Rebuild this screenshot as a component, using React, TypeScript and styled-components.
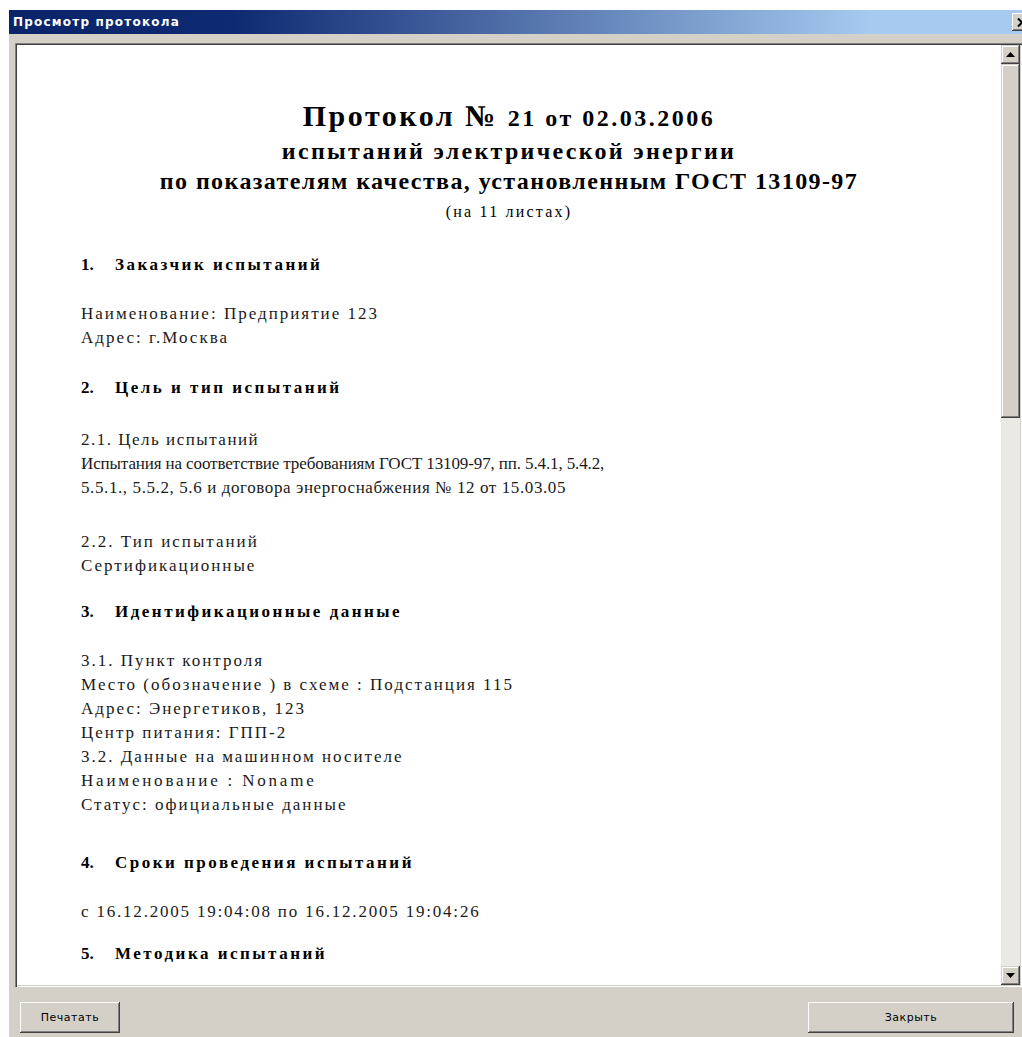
import React from 'react';
import styled, { createGlobalStyle } from 'styled-components';

type Line = string | { text: string; spacing: number };
type Block = { top: number; lines: Line[] };
type Section = { num: string; title: string; top: number; blocks: Block[] };

const sections: Section[] = [
  {
    num: '1.',
    title: 'Заказчик испытаний',
    top: 0,
    blocks: [{ top: 25, lines: ['Наименование: Предприятие 123', 'Адрес: г.Москва'] }],
  },
  {
    num: '2.',
    title: 'Цель и тип испытаний',
    top: 26,
    blocks: [
      {
        top: 28,
        lines: [
          { text: '2.1. Цель испытаний', spacing: 1.5 },
          { text: 'Испытания на соответствие требованиям ГОСТ 13109-97, пп. 5.4.1, 5.4.2,', spacing: -0.12 },
          { text: '5.5.1., 5.5.2, 5.6 и договора энергоснабжения № 12 от 15.03.05', spacing: 0.6 },
        ],
      },
      { top: 30, lines: ['2.2. Тип испытаний', 'Сертификационные'] },
    ],
  },
  {
    num: '3.',
    title: 'Идентификационные данные',
    top: 22,
    blocks: [
      {
        top: 25,
        lines: [
          '3.1. Пункт контроля',
          'Место (обозначение ) в схеме : Подстанция 115',
          'Адрес: Энергетиков, 123',
          'Центр питания: ГПП-2',
          '3.2. Данные на машинном носителе',
          { text: 'Наименование : Noname', spacing: 2.8 },
          'Статус: официальные данные',
        ],
      },
    ],
  },
  {
    num: '4.',
    title: 'Сроки проведения испытаний',
    top: 34,
    blocks: [{ top: 25, lines: [{ text: 'с 16.12.2005 19:04:08 по 16.12.2005 19:04:26', spacing: 1.8 }] }],
  },
  {
    num: '5.',
    title: 'Методика испытаний',
    top: 18,
    blocks: [],
  },
];

function Arrow({ down }: { down?: boolean }) {
  return (
    <svg width="9" height="5" viewBox="0 0 9 5">
      <polygon points={down ? '0,0 9,0 4.5,5' : '0,5 9,5 4.5,0'} fill="#000000" />
    </svg>
  );
}

export default function App() {
  return (
    <>
      <GlobalStyle />
      <Page>
        <Window>
          <TitleBar>
            <TitleText>Просмотр протокола</TitleText>
            <CloseButton>
              <svg width="10" height="9" viewBox="0 0 10 9">
                <path d="M1 0.5 L9 8.5 M9 0.5 L1 8.5" stroke="#000" strokeWidth="2" />
              </svg>
            </CloseButton>
          </TitleBar>
          <Body>
            <Viewer>
              <Document>
                <Header>
                  <HeadLine $size={30} $spacing={2.5} $top={2}>
                    Протокол № <Small>21 от 02.03.2006</Small>
                  </HeadLine>
                  <HeadLine $size={24} $spacing={2.3} $top={3}>
                    испытаний электрической энергии
                  </HeadLine>
                  <HeadLine $size={24} $spacing={1.4} $top={0}>
                    по показателям качества, установленным ГОСТ 13109-97
                  </HeadLine>
                  <Sheets>(на 11 листах)</Sheets>
                </Header>
                {sections.map((s) => (
                  <div key={s.num}>
                    <Heading $top={s.top}>
                      <Num>{s.num}</Num>
                      {s.title}
                    </Heading>
                    {s.blocks.map((b, i) => (
                      <Para key={i} $top={b.top}>
                        {b.lines.map((l) =>
                          typeof l === 'string' ? (
                            <TextLine key={l} $spacing={2}>
                              {l}
                            </TextLine>
                          ) : (
                            <TextLine key={l.text} $spacing={l.spacing}>
                              {l.text}
                            </TextLine>
                          )
                        )}
                      </Para>
                    ))}
                  </div>
                ))}
              </Document>
              <ScrollBar>
                <ScrollButton>
                  <Arrow />
                </ScrollButton>
                <Track>
                  <Thumb />
                </Track>
                <ScrollButton>
                  <Arrow down />
                </ScrollButton>
              </ScrollBar>
            </Viewer>
            <Footer>
              <Button $width={100}>Печатать</Button>
              <Button $width={206}>Закрыть</Button>
            </Footer>
          </Body>
        </Window>
      </Page>
    </>
  );
}

const GlobalStyle = createGlobalStyle`
  html, body {
    margin: 0;
    padding: 0;
    background: #ffffff;
  }
  #root {
    width: 1022px;
    height: 1037px;
    overflow: hidden;
  }
`;

const Page = styled.div`
  width: 1022px;
  height: 1037px;
  overflow: hidden;
  padding: 10px 0 0 9px;
  box-sizing: border-box;
`;

const Window = styled.div`
  width: 1026px;
  height: 1040px;
  display: flex;
  flex-direction: column;
  background: #d4d0c8;
`;

const TitleBar = styled.div`
  height: 24px;
  display: flex;
  align-items: center;
  justify-content: space-between;
  padding: 0 3px 0 4px;
  background: linear-gradient(to right, #0a246a 0%, #0e2a72 22%, #a6caf0 84%, #a6caf0 100%);
`;

const TitleText = styled.span`
  font-family: 'DejaVu Sans', 'Liberation Sans', sans-serif;
  font-weight: 700;
  font-size: 12px;
  letter-spacing: 1.2px;
  color: #ffffff;
`;

const CloseButton = styled.div`
  width: 20px;
  height: 18px;
  display: flex;
  align-items: center;
  justify-content: center;
  background: #d4d0c8;
  box-shadow: inset -1px -1px #404040, inset 1px 1px #ffffff, inset -2px -2px #808080;
`;

const Body = styled.div`
  flex: 1;
  display: flex;
  flex-direction: column;
  padding: 9px 4px 0 6px;
`;

const Viewer = styled.div`
  width: 1007px;
  height: 944px;
  display: flex;
  padding: 2px;
  box-sizing: border-box;
  background: #ffffff;
  box-shadow: inset 1px 1px #808080, inset 2px 2px #404040, inset -1px -1px #ffffff, inset -2px -2px #d4d0c8;
`;

const Document = styled.div`
  flex: 1;
  overflow: hidden;
  padding: 0 0 0 64px;
  font-family: 'Liberation Serif', 'Times New Roman', serif;
  color: #1a1a1a;
`;

const Header = styled.div`
  display: flex;
  flex-direction: column;
  align-items: center;
  padding: 54px 64px 0 0;
  margin-bottom: 26px;
  color: #000000;
`;

const HeadLine = styled.div<{ $size: number; $spacing: number; $top: number }>`
  margin-top: ${({ $top }) => $top}px;
  font-size: ${({ $size }) => $size}px;
  letter-spacing: ${({ $spacing }) => $spacing}px;
  line-height: 30px;
  font-weight: 700;
  white-space: nowrap;
`;

const Small = styled.span`
  font-size: 24px;
`;

const Sheets = styled.div`
  margin-top: 1px;
  font-size: 16px;
  line-height: 30px;
  letter-spacing: 2.2px;
`;

const Heading = styled.div<{ $top: number }>`
  margin-top: ${({ $top }) => $top}px;
  font-size: 17px;
  line-height: 24px;
  font-weight: 700;
  letter-spacing: 2.5px;
  color: #000000;
`;

const Num = styled.span`
  display: inline-block;
  width: 34px;
  letter-spacing: 0;
`;

const Para = styled.div<{ $top: number }>`
  margin-top: ${({ $top }) => $top}px;
  font-size: 17px;
  line-height: 24px;
  white-space: nowrap;
`;

const TextLine = styled.div<{ $spacing: number }>`
  letter-spacing: ${({ $spacing }) => $spacing}px;
`;

const ScrollBar = styled.div`
  width: 19px;
  display: flex;
  flex-direction: column;
  background: #d4d0c8;
`;

const ScrollButton = styled.div`
  height: 19px;
  display: flex;
  align-items: center;
  justify-content: center;
  background: #d4d0c8;
  box-shadow: inset -1px -1px #404040, inset 1px 1px #d4d0c8, inset -2px -2px #808080, inset 2px 2px #ffffff;
`;

const Track = styled.div`
  flex: 1;
  background: #ebe9e4;
`;

const Thumb = styled.div`
  height: 354px;
  background: #d4d0c8;
  box-shadow: inset -1px -1px #404040, inset 1px 1px #d4d0c8, inset -2px -2px #808080, inset 2px 2px #ffffff;
`;

const Footer = styled.div`
  display: flex;
  justify-content: space-between;
  padding: 15px 8px 0 5px;
  width: 1007px;
  box-sizing: border-box;
`;

const Button = styled.div<{ $width: number }>`
  width: ${({ $width }) => $width}px;
  height: 31px;
  display: flex;
  align-items: center;
  justify-content: center;
  font-family: 'DejaVu Sans', 'Liberation Sans', sans-serif;
  font-size: 11px;
  letter-spacing: 0.5px;
  color: #000000;
  background: #d4d0c8;
  box-shadow: inset -1px -1px #404040, inset 1px 1px #ffffff, inset -2px -2px #808080;
`;
